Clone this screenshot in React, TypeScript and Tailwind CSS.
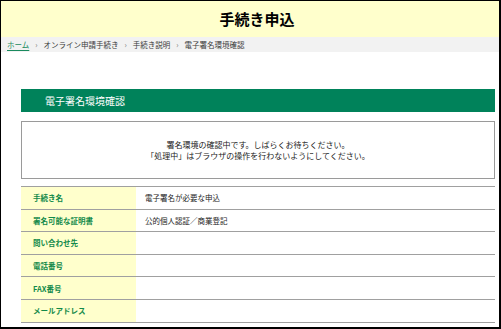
const ROWS: [string, string][] = [
  ['手続き名', '電子署名が必要な申込'],
  ['署名可能な証明書', '公的個人認証／商業登記'],
  ['問い合わせ先', ''],
  ['電話番号', ''],
  ['FAX番号', ''],
  ['メールアドレス', ''],
];

const CRUMBS = ['オンライン申請手続き', '手続き説明', '電子署名環境確認'];

export default function App() {
  return (
    <div
      className="h-[329px] w-[501px] overflow-hidden border-t border-l border-r-2 border-b-2 border-black bg-white"
      style={{ fontFamily: '"Noto Sans CJK JP", "Noto Sans", sans-serif' }}
    >
      {/* ヘッダー */}
      <div className="flex h-[36px] items-center justify-center bg-[#ffffcc] pl-[14px] text-[15px] font-bold text-black">
        手続き申込
      </div>

      {/* パンくず */}
      <nav className="flex h-[15px] items-center bg-[#f2f2f2] pl-[6px] text-[7.5px] text-[#3a3a3a]">
        <a href="#" className="text-[#1a8a5e] underline underline-offset-2">
          ホーム
        </a>
        {CRUMBS.map((c) => (
          <span key={c} className="flex items-center">
            <span className="mx-[6px] text-[#777]">›</span>
            {c}
          </span>
        ))}
      </nav>

      <div className="ml-[20px] mt-[37px] w-[474px]">
        <h2 className="flex h-[23px] items-center bg-[#00825a] pl-[24px] text-[10px] text-white">
          電子署名環境確認
        </h2>

        <div className="mt-[9px] flex h-[58px] flex-col items-center justify-center border-[1.5px] border-[#9a9a9a] text-[8px] leading-[11px] text-[#222]">
          <p>署名環境の確認中です。しばらくお待ちください。</p>
          <p>「処理中」はブラウザの操作を行わないようにしてください。</p>
        </div>

        <div className="mt-[7px] border-t-[1.5px] border-[#a0a0a0]">
          {ROWS.map(([label, value]) => (
            <div key={label} className="flex h-[22.6px] border-b-[1.5px] border-[#a0a0a0]">
              <div className="flex w-[115px] items-center bg-[#ffffcc] pl-[12px] text-[7.5px] font-bold text-[#128a4a]">
                {label}
              </div>
              <div className="flex flex-1 items-center pl-[9px] text-[7.5px] text-[#222]">
                {value}
              </div>
            </div>
          ))}
        </div>
      </div>
    </div>
  );
}
